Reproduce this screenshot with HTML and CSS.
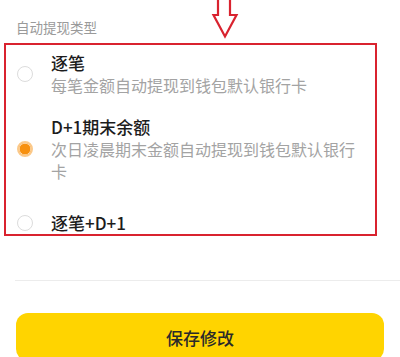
FILE: index.html
```html
<!DOCTYPE html>
<html lang="zh-CN">
<head>
<meta charset="utf-8">
<link rel="stylesheet" href="styles.css">
</head>
<body>
<div class="page">
  <svg class="arrow" width="28" height="40" viewBox="0 0 28 40">
    <path d="M7 -2 V15 H2.5 L14 36.5 L25.5 15 H19 V-2" fill="#fff" stroke="#d9232f" stroke-width="2.2" stroke-linejoin="miter"/>
  </svg>
  <div class="label">自动提现类型</div>
  <div class="box">
    <div class="option opt1">
      <span class="radio"></span>
      <div class="text">
        <div class="title">逐笔</div>
        <div class="desc">每笔金额自动提现到钱包默认银行卡</div>
      </div>
    </div>
    <div class="option opt2">
      <span class="radio checked"></span>
      <div class="text">
        <div class="title">D+1期末余额</div>
        <div class="desc">次日凌晨期末金额自动提现到钱包默认银行卡</div>
      </div>
    </div>
    <div class="option opt3">
      <span class="radio"></span>
      <div class="text">
        <div class="title">逐笔+D+1</div>
      </div>
    </div>
  </div>
  <div class="divider"></div>
  <button class="save">保存修改</button>
</div>
</body>
</html>
```
FILE: styles.css
```css
html, body {
  margin: 0;
  padding: 0;
  background: #fff;
  overflow: hidden;
}
.page {
  position: relative;
  width: 400px;
  height: 357px;
  overflow: hidden;
  font-family: "Noto Sans CJK SC", "Noto Sans", sans-serif;
}
.arrow {
  position: absolute;
  left: 211px;
  top: 0;
}
.label {
  padding: 17px 0 0 16px;
  height: 20px;
  line-height: 20px;
  font-size: 13.5px;
  color: #9a9a9a;
}
.box {
  margin: 6px 0 0 4px;
  width: 369px;
  height: 189px;
  border: 2px solid #d9232f;
  padding-top: 7px;
  box-sizing: content-box;
}
.box {
  height: 182px;
}
.option {
  display: flex;
  align-items: center;
}
.radio {
  width: 16px;
  height: 16px;
  box-sizing: border-box;
  border: 1px solid #dcdcdc;
  border-radius: 50%;
  margin-left: 11px;
  margin-right: 18px;
  flex: none;
}
.radio.checked {
  border: 2px solid #fbc98a;
  background: #f7900f;
  box-shadow: inset 0 0 0 0.5px #fff;
}
.title {
  font-size: 17px;
  line-height: 22px;
  font-weight: 500;
  color: #1c1c1c;
}
.desc {
  font-size: 16px;
  line-height: 22px;
  color: #a3a3a3;
  width: 315px;
}
.opt2 {
  margin-top: 20px;
}
.opt3 {
  margin-top: 30px;
}
.opt3 .title {
  line-height: 21px;
}
.divider {
  margin: 44px 0 0 15px;
  height: 1px;
  background: #ececec;
}
.save {
  display: block;
  margin: 32px 0 0 16px;
  width: 368px;
  height: 48px;
  border: none;
  border-radius: 12px;
  background: #ffd400;
  color: #2a2a2a;
  font-family: "Noto Sans CJK SC", "Noto Sans", sans-serif;
  font-size: 17px;
  font-weight: 500;
  padding: 0;
}
```
